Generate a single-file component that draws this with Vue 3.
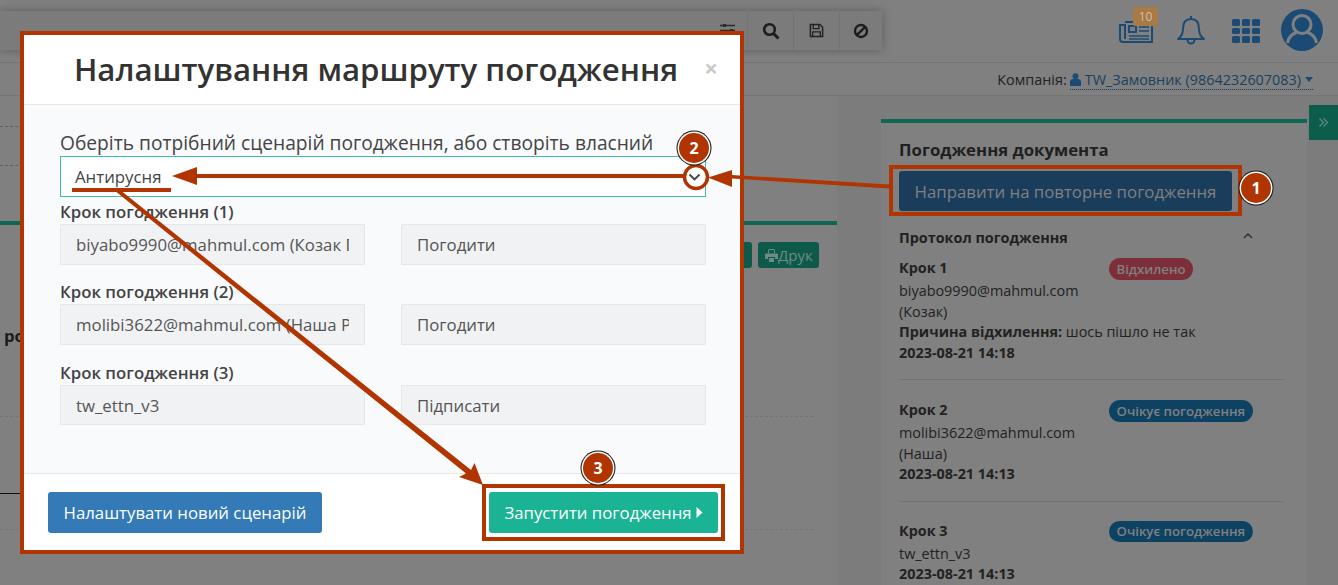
<script setup>
const toolButtons = ['search', 'save', 'ban']
const steps = [
  { title: 'Крок 1', who: 'biyabo9990@mahmul.com', name: '(Козак)', reason: 'шось пішло не так', date: '2023-08-21 14:18', badge: 'Відхилено', kind: 'red' },
  { title: 'Крок 2', who: 'molibi3622@mahmul.com', name: '(Наша)', date: '2023-08-21 14:13', badge: 'Очікує погодження', kind: 'blue' },
  { title: 'Крок 3', who: 'tw_ettn_v3', date: '2023-08-21 14:13', badge: 'Очікує погодження', kind: 'blue' }
]
const routeSteps = [
  { label: 'Крок погодження (1)', who: 'biyabo9990@mahmul.com (Козак Петро)', action: 'Погодити' },
  { label: 'Крок погодження (2)', who: 'molibi3622@mahmul.com (Наша Ревізорка)', action: 'Погодити' },
  { label: 'Крок погодження (3)', who: 'tw_ettn_v3', action: 'Підписати' }
]
const marks = [
  { n: 1, x: 1256, y: 188 },
  { n: 2, x: 694, y: 148 },
  { n: 3, x: 598, y: 468 }
]
</script>

<template>
  <div class="page">
    <header class="topbar">
      <div class="toolbar">
        <div class="tool tool-first">
          <svg width="15" height="14" viewBox="0 0 15 14"><path d="M0 1.500h15M0 6.500h15M0 11.500h15" stroke="#2b2b2b" stroke-width="1.400" /><rect x="3" y="0" width="3" height="3" fill="#2b2b2b" /><rect x="10" y="5" width="3" height="3" fill="#2b2b2b" /><rect x="5" y="10" width="3" height="3" fill="#2b2b2b" /></svg>
        </div>
        <div v-for="t in toolButtons" :key="t" class="tool">
          <svg v-if="t === 'search'" width="18" height="18" viewBox="0 0 18 18"><circle cx="7.500" cy="7.500" r="5.300" fill="none" stroke="#1c1c1c" stroke-width="2.600" /><path d="M11.500 11.500l5 5" stroke="#1c1c1c" stroke-width="3" /></svg>
          <svg v-else-if="t === 'save'" width="15" height="15" viewBox="0 0 16 16"><path d="M1.500 1.500h10l3 3v10h-13z" fill="none" stroke="#222" stroke-width="1.600" /><path d="M4.500 2v4h6V2" fill="none" stroke="#222" stroke-width="1.400" /><path d="M4 14V9.500h8V14" fill="none" stroke="#222" stroke-width="1.400" /></svg>
          <svg v-else width="16" height="16" viewBox="0 0 16 16"><circle cx="8" cy="8" r="6" fill="none" stroke="#1c1c1c" stroke-width="2.400" /><path d="M3.800 12.200l8.400-8.400" stroke="#1c1c1c" stroke-width="2.400" /></svg>
        </div>
      </div>
      <div class="top-icons">
        <div class="news">
          <svg width="34" height="24" viewBox="0 0 34 24" fill="none" stroke="#1b4b74" stroke-width="2"><path d="M6 3h27v20H4a3 3 0 0 1-3-3V6h5v14" /><rect x="10" y="7" width="7" height="6" /><path d="M20 8h10M20 12h10M10 17h20M10 20h20" stroke-width="1.600" /></svg>
          <span class="news-count">10</span>
        </div>
        <svg class="bell" width="28" height="30" viewBox="0 0 28 30" fill="none" stroke="#1b4b74" stroke-width="2"><path d="M14 1v3M14 4c-6 0-8 5-8 10 0 5-2 8-5 10h26c-3-2-5-5-5-10 0-5-2-10-8-10z" stroke-linejoin="round" /><path d="M10.500 25a3.500 3.500 0 0 0 7 0" /></svg>
        <div class="apps">
          <i v-for="n in 9" :key="n"></i>
        </div>
        <svg class="avatar" width="42" height="42" viewBox="0 0 42 42"><circle cx="21" cy="21" r="21" fill="#1b4b74" /><circle cx="21" cy="15.500" r="9" fill="none" stroke="#808080" stroke-width="3" /><path d="M6.500 34c1-7 6-9.500 9-10.500M35.500 34c-1-7-6-9.500-9-10.500" fill="none" stroke="#808080" stroke-width="3" /></svg>
      </div>
    </header>

    <div class="companybar">
      <span class="company-label">Компанія:</span>
      <span class="company-link">
        <svg width="11" height="13" viewBox="0 0 11 13" fill="#1b4b74"><circle cx="5.500" cy="3.300" r="3" /><path d="M0 13V9c0-2 1.500-3 3-3h5c1.500 0 3 1 3 3v4z" /></svg>
        TW_Замовник (9864232607083)
        <span class="caret"></span>
      </span>
    </div>

    <main class="content">
      <section class="left">
        <div class="left-top">
          <div class="dash"></div>
          <div class="dash dash-2"></div>
        </div>
        <div class="left-panel">
          <div class="left-actions">
            <span class="print-btn print-hidden"></span>
            <span class="print-btn">
              <svg width="13" height="13" viewBox="0 0 13 13" fill="#6f8a82"><path d="M3 1.500a1.500 1.500 0 0 1 1.500-1.500h4A1.500 1.500 0 0 1 10 1.500V4H9V1H4v3H3zM1 4.500h11a1 1 0 0 1 1 1V10h-3V8H3v2H0V5.500a1 1 0 0 1 1-1zM4 9h5v4H4z" /></svg>Друк
            </span>
          </div>
          <div class="cut-word">ро</div>
          <div class="dotted dotted-1"></div>
          <div class="solid"></div>
          <div class="dotted dotted-2"></div>
        </div>
      </section>

      <aside class="right">
        <h3 class="doc-title">Погодження документа</h3>
        <button class="resend">Направити на повторне погодження</button>
        <div class="protocol-head">
          <span>Протокол погодження</span>
          <svg width="10" height="6" viewBox="0 0 10 6" fill="none" stroke="#2b2b2b" stroke-width="1.300"><path d="M1 5l4-4 4 4" /></svg>
        </div>
        <div v-for="s in steps" :key="s.title" class="step">
          <div class="step-main">
            <div class="step-title">{{ s.title }}</div>
            <div class="step-text">{{ s.who }}</div>
            <div v-if="s.name" class="step-text">{{ s.name }}</div>
            <div v-if="s.reason" class="step-text wide"><b>Причина відхилення:</b> {{ s.reason }}</div>
            <div class="step-date">{{ s.date }}</div>
          </div>
          <span class="badge" :class="s.kind">{{ s.badge }}</span>
        </div>
      </aside>
    </main>

    <div class="side-tab">
      <svg width="9" height="9" viewBox="0 0 9 9" fill="none" stroke="#5f8a80" stroke-width="1.200"><path d="M0.500 0.500l4 4-4 4M4.500 0.500l4 4-4 4" /></svg>
    </div>

    <div class="modal">
      <div class="modal-head">
        <h2>Налаштування маршруту погодження</h2>
        <span class="close">×</span>
      </div>
      <div class="modal-body">
        <label class="scenario-label">Оберіть потрібний сценарій погодження, або створіть власний</label>
        <div class="scenario">Антирусня</div>
        <div v-for="r in routeSteps" :key="r.label" class="route">
          <div class="route-label">{{ r.label }}</div>
          <div class="route-fields">
            <input class="field" disabled :value="r.who" />
            <input class="field" disabled :value="r.action" />
          </div>
        </div>
      </div>
      <div class="modal-foot">
        <button class="btn btn-blue">Налаштувати новий сценарій</button>
        <div class="start-mark">
          <button class="btn btn-green">Запустити погодження<svg width="7" height="11" viewBox="0 0 7 11" fill="#fff"><path d="M0.500 0l6 5.500-6 5.500z" /></svg></button>
        </div>
      </div>
    </div>

    <div class="resend-mark"></div>

    <svg class="annotations" width="1338" height="585" viewBox="0 0 1338 585">
      <g fill="#b03500" stroke="none">
        <path d="M889 188.500L732 178.500V187L708 177.500L732 170V175L889 184.500z" />
        <path d="M683 174V178H197V185L172 176L197 167V174z" />
        <rect x="72" y="188" width="99" height="4" />
        <path d="M114.500 190.500L117 187.500L471 470L474.500 463L483 485L459 477L466 473.500z" />
      </g>
      <circle cx="696" cy="177" r="11.500" fill="#fff" stroke="#b03500" stroke-width="3.500" />
      <path d="M689.500 174.500l5 5 5-5" fill="none" stroke="#444" stroke-width="1.800" />
      <g v-for="m in marks" :key="m.n">
        <circle :cx="m.x" :cy="m.y" r="17.500" fill="#111" />
        <circle :cx="m.x" :cy="m.y" r="16.500" fill="#fff" />
        <circle :cx="m.x" :cy="m.y" r="15" fill="#b03500" />
        <text :x="m.x" :y="m.y + 6" text-anchor="middle" class="mark-num">{{ m.n }}</text>
      </g>
    </svg>
  </div>
</template>

<style scoped>
.page {
  position: relative;
  width: 1338px;
  height: 585px;
  overflow: hidden;
  background: #7c7c7c;
  font-family: "Open Sans", "Noto Sans", sans-serif;
  color: #222;
}
.topbar {
  display: flex;
  justify-content: space-between;
  height: 62px;
  background: #808080;
  border-bottom: 1px solid #747474;
}
.toolbar {
  display: flex;
  justify-content: flex-end;
  width: 882px;
  height: 39px;
  margin-top: 11px;
  background: #7b7b7b;
  box-shadow: 0 0 10px rgba(0, 0, 0, 0.28);
}
.tool {
  display: flex;
  align-items: center;
  justify-content: center;
  width: 46px;
  border-left: 1px solid #737373;
  box-sizing: border-box;
}
.tool:last-child {
  width: 43px;
}
.tool-first {
  width: 47px;
  border-left: none;
  justify-content: flex-start;
  padding-left: 20px;
}
.top-icons {
  display: flex;
  align-items: flex-start;
  padding-right: 15px;
}
.news {
  position: relative;
  margin-top: 19px;
  width: 34px;
  height: 24px;
}
.news-count {
  position: absolute;
  left: 14px;
  top: -12px;
  width: 25px;
  height: 19px;
  border-radius: 2px;
  background: #a97a45;
  color: #cfc0ac;
  font-size: 12px;
  line-height: 19px;
  text-align: center;
}
.bell {
  margin: 15px 0 0 24px;
}
.apps {
  display: grid;
  grid-template-columns: repeat(3, 8px);
  grid-auto-rows: 6.500px;
  gap: 2px 2px;
  margin: 19px 0 0 27px;
}
.apps i {
  display: block;
  background: #1b4b74;
  border-radius: 1.500px;
}
.avatar {
  margin: 9px 0 0 21px;
}
.companybar {
  display: flex;
  justify-content: flex-end;
  align-items: center;
  gap: 3px;
  height: 32px;
  padding-right: 25px;
  background: #808080;
  border-bottom: 1px solid #747474;
  font-size: 14.400px;
}
.company-label {
  color: #222;
}
.company-link {
  display: inline-flex;
  align-items: center;
  gap: 4px;
  color: #1b4060;
  border-bottom: 1px dotted #1b3a55;
  line-height: 18px;
  margin-top: 2px;
}
.caret {
  width: 0;
  height: 0;
  border-left: 4px solid transparent;
  border-right: 4px solid transparent;
  border-top: 5px solid #1b4b74;
}
.content {
  display: flex;
  height: 490px;
}
.left {
  width: 837px;
  flex: none;
}
.left-top {
  height: 125px;
  box-sizing: border-box;
  padding-top: 30px;
  background: #808080;
}
.dash {
  width: 300px;
  height: 0;
  border-top: 1px dashed #606060;
}
.dash-2 {
  margin-top: 38px;
}
.left-panel {
  height: 365px;
  background: #808080;
  border-top: 4px solid #0e6654;
  box-sizing: border-box;
}
.left-actions {
  display: flex;
  justify-content: flex-end;
  gap: 6px;
  padding: 17px 18px 0 0;
}
.print-btn {
  display: inline-flex;
  align-items: center;
  height: 26px;
  width: 61px;
  box-sizing: border-box;
  padding-left: 7px;
  border-radius: 3px;
  background: #0d5a4a;
  color: #6f8a82;
  font-size: 15px;
}
.print-hidden {
  width: 40px;
}
.cut-word {
  margin: 56px 0 0 4px;
  font-size: 16.800px;
  font-weight: 700;
  line-height: 24px;
  color: #1c1c1c;
}
.dotted {
  height: 0;
  margin: 0 24px 0 0;
  border-top: 1px dashed #747474;
}
.dotted-1 {
  margin-top: 68px;
}
.solid {
  width: 60px;
  height: 1px;
  margin-top: 76px;
  background: #111;
}
.dotted-2 {
  margin-top: 35px;
}
.right {
  width: 426px;
  margin: 23px 0 0 44px;
  box-sizing: border-box;
  padding: 17px 24px 0 18px;
  background: #808080;
  border-top: 4px solid #0e6654;
  flex: none;
}
.doc-title {
  margin: 0 0 11px;
  font-size: 16.800px;
  line-height: 20px;
  font-weight: 700;
  color: #1f1f1f;
}
.resend {
  display: block;
  width: 333px;
  height: 40px;
  margin: 0 0 17px;
  padding: 0;
  border: none;
  border-radius: 3px;
  background: #1a3d5c;
  color: #808080;
  font: 16.800px "Open Sans", sans-serif;
}
.protocol-head {
  display: flex;
  justify-content: space-between;
  align-items: flex-start;
  width: 354px;
  font-size: 14.400px;
  font-weight: 700;
  line-height: 20px;
  color: #1f1f1f;
}
.protocol-head svg {
  margin-top: 5px;
}
.step {
  position: relative;
  display: flex;
  justify-content: space-between;
  width: 384px;
  box-sizing: border-box;
  padding: 10px 0 16px;
  border-bottom: 1px solid #727272;
  margin-bottom: 10px;
}
.step:last-child {
  padding-top: 9px;
}
.step:last-child .badge {
  top: 9px;
  height: 21px;
  line-height: 21px;
}
.step-main {
  width: 210px;
  font-size: 14.400px;
}
.step-title {
  font-weight: 700;
  line-height: 20px;
  margin-bottom: 3px;
}
.step-text {
  line-height: 20.500px;
  color: #222;
}
.step-text.wide {
  white-space: nowrap;
}
.step-date {
  font-weight: 700;
  line-height: 20.500px;
}
.badge {
  position: absolute;
  left: 210px;
  top: 10px;
  height: 22px;
  padding: 0 7.500px;
  border-radius: 11px;
  font-size: 13.200px;
  font-weight: 600;
  line-height: 22px;
  color: #808080;
  white-space: nowrap;
}
.badge.red {
  background: #7c2f38;
}
.badge.blue {
  background: #0e4263;
}
.side-tab {
  position: absolute;
  right: 0;
  top: 105px;
  width: 29px;
  height: 35px;
  display: flex;
  align-items: center;
  justify-content: center;
  background: #0d5d4d;
}
.modal {
  position: absolute;
  left: 20px;
  top: 31px;
  width: 724px;
  height: 523px;
  box-sizing: border-box;
  border: 4px solid #b03500;
  background: #fff;
  display: flex;
  flex-direction: column;
}
.modal-head {
  display: flex;
  align-items: center;
  justify-content: center;
  position: relative;
  height: 70px;
  box-sizing: border-box;
  padding: 0 12px 2px 0;
  border-bottom: 1px solid #e7e7e7;
}
.modal-head h2 {
  margin: 0;
  font-size: 31.200px;
  font-weight: 600;
  color: #333;
  white-space: nowrap;
}
.close {
  position: absolute;
  right: 22px;
  top: 18px;
  font-size: 24px;
  font-weight: 700;
  color: #c9c9c9;
  line-height: 30px;
}
.modal-body {
  flex: 1;
  box-sizing: border-box;
  padding: 25px 34px 0 36px;
  background: #f9fafc;
  border-bottom: 1px solid #e7e7e7;
}
.scenario-label {
  display: block;
  font-size: 19.200px;
  line-height: 26px;
  color: #444;
}
.scenario {
  height: 41px;
  box-sizing: border-box;
  padding-left: 14px;
  border: 1px solid #3bc0a4;
  background: #fff;
  font-size: 16.800px;
  line-height: 39px;
  color: #444;
}
.route {
  margin-bottom: 12px;
}
.route + .route {
  margin-bottom: 13px;
}
.route + .route + .route .field {
  height: 40px;
}
.route-label {
  padding: 3px 0 1px;
  font-size: 16.800px;
  font-weight: 600;
  line-height: 23px;
  color: #444;
}
.route-fields {
  display: flex;
  gap: 36px;
}
.field {
  width: 305px;
  height: 41px;
  box-sizing: border-box;
  padding: 0 15px;
  border: 1px solid #e6e7e9;
  border-radius: 1px;
  background: #f1f2f4;
  color: #555;
  opacity: 1;
  font: 16.800px "Open Sans", sans-serif;
  -webkit-text-fill-color: #555;
}
.modal-foot {
  display: flex;
  justify-content: space-between;
  align-items: center;
  height: 76px;
  box-sizing: border-box;
  padding: 0 15px 0 24px;
}
.btn {
  height: 41px;
  border: none;
  border-radius: 3px;
  color: #fff;
  font: 16.800px "Open Sans", sans-serif;
  padding: 0;
}
.btn-blue {
  width: 274px;
  background: #337ab7;
}
.btn-green {
  display: flex;
  align-items: center;
  justify-content: center;
  gap: 4px;
  width: 229px;
  background: #1ab394;
}
.start-mark {
  padding: 4px 3px;
  border: 4px solid #b03500;
}
.resend-mark {
  position: absolute;
  left: 889px;
  top: 165px;
  width: 353px;
  height: 51px;
  box-sizing: border-box;
  border: 4px solid #b03500;
}
.annotations {
  position: absolute;
  left: 0;
  top: 0;
  pointer-events: none;
}
.mark-num {
  font-family: "Open Sans", sans-serif;
  font-size: 16px;
  font-weight: 700;
  fill: #fff;
}
</style>
